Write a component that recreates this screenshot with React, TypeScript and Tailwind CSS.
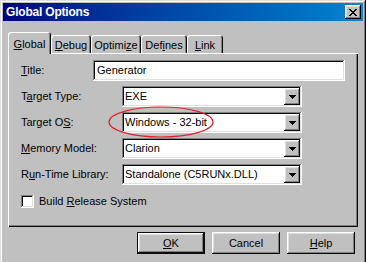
import React from 'react';

const raised =
  'shadow-[inset_-1px_-1px_#0a0a0a,inset_1px_1px_#ffffff,inset_-2px_-2px_#808080,inset_2px_2px_#dfdfdf]';
const sunken =
  'shadow-[inset_-1px_-1px_#ffffff,inset_1px_1px_#808080,inset_-2px_-2px_#dfdfdf,inset_2px_2px_#0a0a0a]';

function Key({ children }: { children: React.ReactNode }) {
  return <span className="underline underline-offset-[1px]">{children}</span>;
}

function Arrow() {
  return (
    <svg width="7" height="4" viewBox="0 0 7 4" shapeRendering="crispEdges">
      <path d="M0 0h7v1H0z M1 1h5v1H1z M2 2h3v1H2z M3 3h1v1H3z" fill="#000" />
    </svg>
  );
}

function Combo({ value }: { value: string }) {
  return (
    <div className={`flex h-[21px] w-[180px] items-center bg-white ${sunken}`}>
      <span className="flex-1 truncate pl-[3px]">{value}</span>
      <div className={`mr-[2px] flex h-[17px] w-[16px] items-center justify-center bg-[#c0c0c0] ${raised}`}>
        <Arrow />
      </div>
    </div>
  );
}

function Tab({ label, width, active }: { label: React.ReactNode; width: string; active?: boolean }) {
  return (
    <div
      className={`flex items-start justify-center rounded-t-[3px] bg-[#c0c0c0] shadow-[inset_1px_1px_#ffffff,inset_-1px_0_#0a0a0a,inset_-2px_0_#808080] ${width} ${
        active ? 'relative z-10 -mb-px h-[22px] pt-[4px]' : 'h-[18px] pt-[2px]'
      }`}
    >
      {label}
    </div>
  );
}

function Row({ label, labelWidth, children }: { label: React.ReactNode; labelWidth: string; children: React.ReactNode }) {
  return (
    <div className="flex h-[21px] items-center">
      <div className={labelWidth}>{label}</div>
      {children}
    </div>
  );
}

export default function App() {
  return (
    <div className="relative h-[262px] w-[366px] overflow-hidden bg-[#c0c0c0] font-['Liberation_Sans',Arial,sans-serif] text-[11px] text-black">
      <div className="h-[270px] p-[3px] shadow-[inset_-1px_-1px_#0a0a0a,inset_1px_1px_#dfdfdf,inset_-2px_-2px_#808080,inset_2px_2px_#ffffff]">
        <div className="flex h-[18px] items-center justify-between bg-gradient-to-r from-[#000080] to-[#1084d0] pl-[3px] pr-[2px]">
          <span className="text-[12px] font-bold tracking-[-0.2px] text-white">Global Options</span>
          <div className={`flex h-[14px] w-[16px] items-center justify-center bg-[#c0c0c0] ${raised}`}>
            <svg width="8" height="7" viewBox="0 0 8 7" shapeRendering="crispEdges">
              <path
                d="M0 0h2v1H0z M6 0h2v1H6z M1 1h2v1H1z M5 1h2v1H5z M2 2h4v1H2z M3 3h2v1H3z M2 4h4v1H2z M1 5h2v1H1z M5 5h2v1H5z M0 6h2v1H0z M6 6h2v1H6z"
                fill="#000"
              />
            </svg>
          </div>
        </div>

        <div className="px-[5px] pt-[11px]">
          <div className="flex h-[21px] items-end">
            <Tab active width="w-[43px]" label={<span><Key>G</Key>lobal</span>} />
            <Tab width="w-[40px]" label={<span><Key>D</Key>ebug</span>} />
            <Tab width="w-[50px]" label={<span>Optimi<Key>z</Key>e</span>} />
            <Tab width="w-[46px]" label={<span>Def<Key>i</Key>nes</span>} />
            <Tab width="w-[36px]" label={<span><Key>L</Key>ink</span>} />
          </div>

          <div className="h-[174px] pl-[13px] pt-[7px] shadow-[inset_1px_1px_#ffffff,inset_-1px_-1px_#0a0a0a,inset_-2px_-2px_#808080]">
            <div className="flex flex-col gap-[5px]">
              <Row labelWidth="w-[72px]" label={<span><Key>T</Key>itle:</span>}>
                <div className={`flex h-[21px] w-[252px] items-center bg-white pl-[4px] ${sunken}`}>Generator</div>
              </Row>
              <Row labelWidth="w-[101px]" label={<span>T<Key>a</Key>rget Type:</span>}>
                <Combo value="EXE" />
              </Row>
              <Row labelWidth="w-[101px]" label={<span>Target O<Key>S</Key>:</span>}>
                <Combo value="Windows - 32-bit" />
              </Row>
              <Row labelWidth="w-[101px]" label={<span><Key>M</Key>emory Model:</span>}>
                <Combo value="Clarion" />
              </Row>
              <Row labelWidth="w-[101px]" label={<span>R<Key>u</Key>n-Time Library:</span>}>
                <Combo value="Standalone (C5RUNx.DLL)" />
              </Row>
            </div>
            <div className="mt-[10px] flex h-[13px] items-center">
              <div className={`h-[13px] w-[13px] bg-white ${sunken}`} />
              <span className="ml-[5px]">Build <Key>R</Key>elease System</span>
            </div>
          </div>

          <div className="mt-[5px] flex justify-end gap-[7px] pr-[3px]">
            <div className="flex h-[22px] w-[68px] border border-[#0a0a0a]">
              <div className={`flex flex-1 items-center justify-center bg-[#c0c0c0] ${raised}`}>
                <span><Key>O</Key>K</span>
              </div>
            </div>
            <div className={`flex h-[22px] w-[68px] items-center justify-center bg-[#c0c0c0] ${raised}`}>Cancel</div>
            <div className={`flex h-[22px] w-[68px] items-center justify-center bg-[#c0c0c0] ${raised}`}>
              <span><Key>H</Key>elp</span>
            </div>
          </div>
        </div>
      </div>

      <svg className="pointer-events-none absolute left-[106px] top-[105px]" width="110" height="34" viewBox="0 0 110 34">
        <ellipse cx="55" cy="17" rx="52" ry="15" fill="none" stroke="#e0202a" strokeWidth="1.2" />
      </svg>
    </div>
  );
}
